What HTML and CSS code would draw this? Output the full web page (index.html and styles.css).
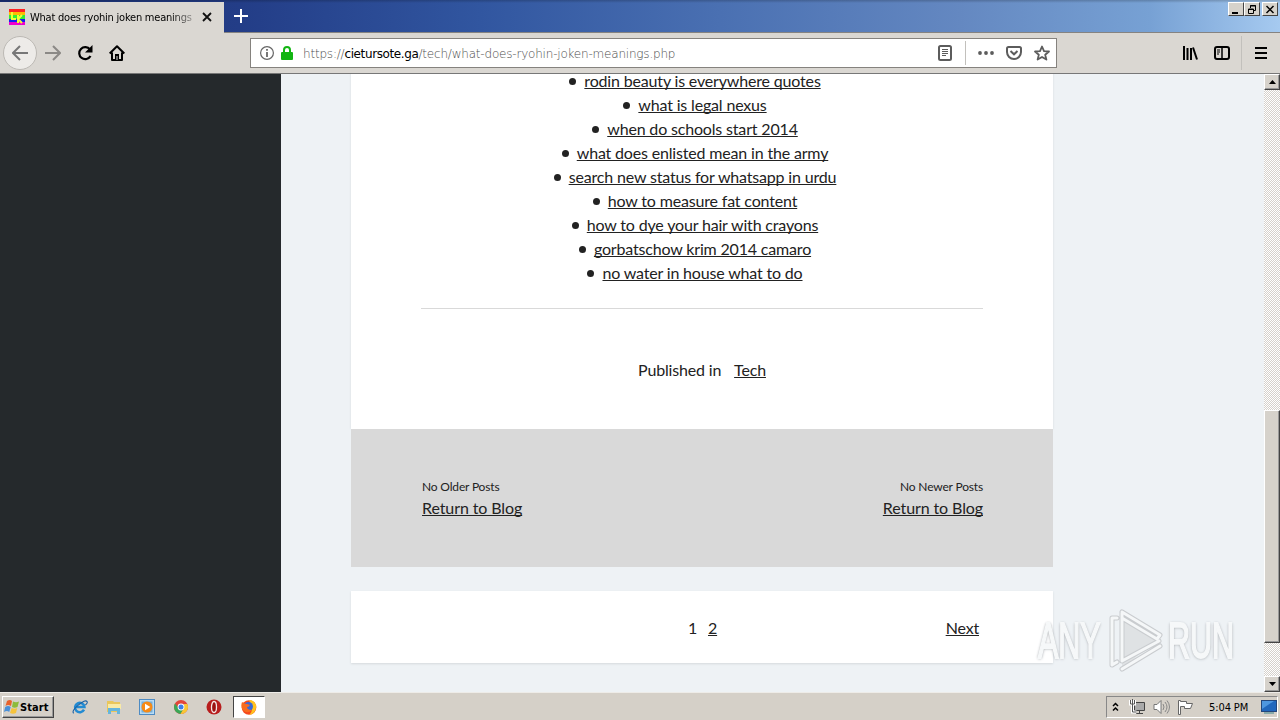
FILE: index.html
```html
<!DOCTYPE html>
<html lang="en">
<head>
    <meta charset="UTF-8">
    <title>What does ryohin joken meanings</title>
    <link rel="stylesheet" href="styles.css">
</head>
<body>
    <!-- Title Bar -->
    <div class="titlebar">
        <div class="tab">
            <svg class="favicon" width="16" height="16" viewBox="0 0 16 16">
                <rect width="16" height="4" fill="#f22"/>
                <rect y="3" width="16" height="4" fill="#fb0"/>
                <rect y="6" width="16" height="4" fill="#3e3"/>
                <rect y="10" width="16" height="3" fill="#12e"/>
                <rect y="13" width="16" height="3" fill="#e0c"/>
                <path d="M3 3v7h4M9 6v8M13 6l-4 4 4 4" fill="none" stroke="#ef3" stroke-width="2"/>
            </svg>
            <span class="tab-title">What does ryohin joken meanings</span>
            <svg class="tab-close" width="10" height="10" viewBox="0 0 10 10"><path d="M1 1l8 8M9 1l-8 8" stroke="#111" stroke-width="1.8"/></svg>
        </div>
        <svg class="new-tab" width="14" height="14" viewBox="0 0 14 14"><path d="M7 0v14M0 7h14" stroke="#fff" stroke-width="2"/></svg>
        <div class="window-buttons">
            <div class="win-btn"><svg width="12" height="11"><path d="M2 9h6" stroke="#000" stroke-width="2"/></svg></div>
            <div class="win-btn"><svg width="12" height="11"><path d="M4.500 4V1.500h5v5H8M4 2h6M2.500 5v4.500h5V5zM2 5.500h6" fill="none" stroke="#000"/></svg></div>
            <div class="win-btn close"><svg width="12" height="11"><path d="M2.500 2l7 7M9.500 2l-7 7" stroke="#000" stroke-width="1.500"/></svg></div>
        </div>
    </div>

    <!-- Navigation Bar -->
    <div class="navbar">
        <div class="back">
            <svg width="16" height="16" viewBox="0 0 16 16"><path d="M16 8H1M8 1L1 8l7 7" fill="none" stroke="#777" stroke-width="2"/></svg>
        </div>
        <svg class="forward" width="16" height="16" viewBox="0 0 16 16"><path d="M0 8h15M8 1l7 7-7 7" fill="none" stroke="#8b8986" stroke-width="2"/></svg>
        <svg class="reload" width="16" height="16" viewBox="0 0 16 16"><path d="M13 4.500A6 6 0 1 0 13.500 11" fill="none" stroke="#000" stroke-width="2.200"/><path d="M15.500 0v7.500H8z"/></svg>
        <svg class="home" width="16" height="16" viewBox="0 0 16 16"><path d="M.7 8.500L8 1.200l7.300 7.300M3 7.500V15h10V7.500" fill="none" stroke="#000" stroke-width="2" stroke-linejoin="round"/><path d="M6 15V9h4v6" /><path d="M8 11v4" stroke="#dad7d2"/></svg>
        <div class="urlbar">
            <svg class="info" width="14" height="14" viewBox="0 0 14 14"><circle cx="7" cy="7" r="6.400" fill="none" stroke="#666" stroke-width="1.200"/><path d="M7 3v1.700M7 6v5" stroke="#555" stroke-width="1.600"/></svg>
            <svg class="lock" width="12" height="14" viewBox="0 0 12 14"><rect y="6" width="12" height="8" rx="1" fill="#12b512"/><path d="M3 7V4a3 3 0 0 1 6 0v3" fill="none" stroke="#12b512" stroke-width="2"/></svg>
            <span class="url">https://<b>cietursote.ga</b>/tech/what-does-ryohin-joken-meanings.php</span>
            <div class="page-actions">
                <svg width="14" height="16" viewBox="0 0 14 16"><rect x="1" y="1" width="12" height="14" rx="1.500" fill="none" stroke="#5c5c5c" stroke-width="2"/><path d="M4 4.500h6M4 6.500h6M4 8.500h6M4 10.500h4" stroke="#5c5c5c"/></svg>
                <span class="divider"></span>
                <svg width="16" height="4" viewBox="0 0 16 4" fill="#5c5c5c"><circle cx="2" cy="2" r="1.900"/><circle cx="8" cy="2" r="1.900"/><circle cx="14" cy="2" r="1.900"/></svg>
                <svg width="16" height="14" viewBox="0 0 16 14" fill="none" stroke="#5c5c5c" stroke-width="2"><path d="M2.500 1h11Q15 1 15 2.500V6a7 7 0 0 1-14 0V2.500Q1 1 2.500 1z"/><path d="M4.500 5L8 8.300 11.500 5"/></svg>
                <svg width="16" height="16" viewBox="0 0 16 16"><path d="M8 1.500l2 4.600 5 .4-3.800 3.300 1.200 4.800L8 12l-4.400 2.600 1.200-4.800L1 6.500l5-.4z" fill="none" stroke="#5c5c5c" stroke-width="1.800" stroke-linejoin="round"/></svg>
            </div>
        </div>
        <div class="toolbar">
            <svg width="16" height="14" viewBox="0 0 16 14"><path d="M2 0v14M5.500 2v12M9 2v12M11 1.500L15 13.500" stroke="#000" stroke-width="2" fill="none"/></svg>
            <svg width="16" height="14" viewBox="0 0 16 14"><rect x="1" y="1" width="14" height="12" rx="2" fill="none" stroke="#000" stroke-width="2"/><path d="M8 1v12" stroke="#000" stroke-width="1.500"/><path d="M3 4h3M3 6h3M3 8h2" stroke="#000"/></svg>
            <span class="divider"></span>
            <svg width="12" height="12" viewBox="0 0 12 12"><path d="M0 1h12M0 6h12M0 11h12" stroke="#000" stroke-width="2"/></svg>
        </div>
    </div>

    <!-- Page -->
    <div class="viewport">
        <div class="sidebar"></div>
        <div class="main">
            <div class="post">
                <ul class="links">
                    <li><a href="#">rodin beauty is everywhere quotes</a></li>
                    <li><a href="#">what is legal nexus</a></li>
                    <li><a href="#">when do schools start 2014</a></li>
                    <li><a href="#">what does enlisted mean in the army</a></li>
                    <li><a href="#">search new status for whatsapp in urdu</a></li>
                    <li><a href="#">how to measure fat content</a></li>
                    <li><a href="#">how to dye your hair with crayons</a></li>
                    <li><a href="#">gorbatschow krim 2014 camaro</a></li>
                    <li><a href="#">no water in house what to do</a></li>
                </ul>
                <div class="published">Published in <a href="#">Tech</a></div>
            </div>
            <div class="post-nav">
                <div class="older">
                    <span>No Older Posts</span>
                    <a href="#">Return to Blog</a>
                </div>
                <div class="newer">
                    <span>No Newer Posts</span>
                    <a href="#">Return to Blog</a>
                </div>
            </div>
            <div class="pagination">
                <span></span>
                <div class="pages"><span>1</span><a href="#">2</a></div>
                <a class="next" href="#">Next</a>
            </div>
        </div>
        <div class="scrollbar">
            <div class="scroll-btn"><svg width="7" height="4"><path d="M0 4L3.500 0 7 4z"/></svg></div>
            <div class="thumb"></div>
            <div class="scroll-btn"><svg width="7" height="4"><path d="M0 0h7L3.500 4z"/></svg></div>
        </div>
        <div class="watermark">
            <span>ANY</span>
            <svg width="56" height="64" viewBox="0 0 56 64" fill="none" stroke-linejoin="round" stroke-linecap="round">
                <path d="M15 4l38 23-38 33z" fill="#dfe2e4"/>
                <path d="M10 9H5v47l5-3M15 3l38 23-3 4-35-21v43l37-20M15 3v49M15 60l38-23" stroke="#c9cccf" stroke-width="5"/>
                <path d="M10 9H5v47l5-3M15 3l38 23-3 4-35-21v43l37-20M15 3v49M15 60l38-23" stroke="#f5f7f8" stroke-width="3"/>
            </svg>
            <span>RUN</span>
        </div>
    </div>

    <!-- Taskbar -->
    <div class="taskbar">
        <div class="start">
            <svg width="16" height="16" viewBox="0 0 16 16"><path d="M3 2q3-2 5 0L7 7Q4 5 1.500 7z" fill="#e8622c"/><path d="M9 2.500q3 1.500 6 0L13.500 8q-3 1.500-5.500 0z" fill="#8dbb3c"/><path d="M1.200 8q3-2 5.500 0l-1.500 5Q3 11 0 13z" fill="#4a90d8"/><path d="M7.700 9q3 1.500 5.500 0L12 14q-3 1.500-6 0z" fill="#f6c33b"/></svg>
            <span>Start</span>
        </div>
        <div class="quick-launch">
            <svg width="16" height="16" viewBox="0 0 18 16"><path d="M13.500 11A5.300 5.300 0 1 1 14 8H5" fill="none" stroke="#238bd2" stroke-width="2.800"/><path d="M2 15Q-1 13 7 6t10-4q1 1-2 4" fill="none" stroke="#1b61a5" stroke-width="1.200"/></svg>
            <svg width="16" height="16" viewBox="0 0 16 16"><path d="M1 2h6l1 1h6v10H1z" fill="#e9c65b"/><path d="M2 5h13v5H2z" fill="#f9eaa5"/><path d="M2 15V9h12v6h-3v-3H5v3z" fill="#66b5dc"/></svg>
            <svg width="16" height="16" viewBox="0 0 16 16"><rect x=".5" y=".5" width="15" height="15" fill="#b8dbf4" stroke="#4e8bc3"/><rect x="2.500" y="2.500" width="11" height="11" fill="#73aeda"/><circle cx="8" cy="8" r="5.500" fill="#f68a16"/><path d="M6 4.700L11.300 8 6 11.300z" fill="#fff"/></svg>
            <svg width="16" height="14" viewBox="-1 0 16 14"><circle cx="7" cy="7" r="7" fill="#e2453a"/><path d="M1 3.500A7 7 0 0 0 6.500 14L10 8.500H5z" fill="#3ba757"/><path d="M13.300 4A7 7 0 0 1 6.500 14L10 8V4z" fill="#f9c735"/><circle cx="7" cy="7" r="3.400" fill="#fff"/><circle cx="7" cy="7" r="2.500" fill="#3e7ee8"/></svg>
            <svg width="16" height="16" viewBox="0 0 16 16"><circle cx="8" cy="8" r="7.500" fill="#b81d1d"/><ellipse cx="8" cy="8" rx="2.500" ry="5.500" fill="#9b1010" stroke="#f3e6e6" stroke-width="1.300"/></svg>
        </div>
        <div class="running">
            <svg width="16" height="16" viewBox="0 0 16 16"><circle cx="8" cy="8.500" r="7.300" fill="#f5491c"/><path d="M8 1q6 0 7.300 6-.5 8-7 9 4-4 2-9z" fill="#ffc21d"/><circle cx="7.500" cy="7.500" r="4.500" fill="#3768d8"/><path d="M1 3q2 2 5 2l3 1q-1 2-3 2 0 3 5 3-4 4-8 1T1 3z" fill="#f76b1e"/></svg>
        </div>
        <div class="tray">
            <svg width="7" height="10" viewBox="0 0 7 10"><path d="M1 4l2.500-2.500L6 4M1 8.500L3.500 6 6 8.500" fill="none" stroke="#000" stroke-width="1.500"/></svg>
            <svg class="net" width="17" height="16" viewBox="0 0 17 16"><path d="M5.500 3.500h10v8h-10zM7 14.500h7M10.500 12v2" fill="#aaa" stroke="#444"/><path d="M1.500 1v4h4V1M3.500 5v8h4" fill="none" stroke="#fff" stroke-width="3"/><path d="M1.500 1v4h4V1M3.500 0v13h4" fill="none" stroke="#555"/></svg>
            <svg class="sound" width="17" height="16" viewBox="0 0 17 16"><path d="M1 5.500h3l4-4v13l-4-4H1z" fill="#fff" stroke="#777"/><path d="M10 5q2 3 0 6M12 3q4 5 0 10M14 1.500q5 6.500 0 13" fill="none" stroke="#888"/></svg>
            <svg class="flag" width="17" height="16" viewBox="0 0 17 16"><path d="M1.500 15.500V1.500h2v1h6v2h6l-2 5h-6v-2h-4v8z" fill="#fff" stroke="#666"/></svg>
            <span class="clock">5:04 PM</span>
            <svg class="desktop" width="16" height="14" viewBox="0 0 16 14"><rect x=".5" y=".5" width="15" height="11" fill="#2167bd" stroke="#24477c"/><path d="M1 1h12L1 9z" fill="#4e97e0"/><path d="M3 13h10" stroke="#8aa" stroke-width="2"/></svg>
        </div>
    </div>
</body>
</html>
```
FILE: styles.css
```css
/* General Styles */
* {
    box-sizing: border-box;
}

body {
    margin: 0;
    width: 1280px;
    height: 720px;
    overflow: hidden;
    display: flex;
    flex-direction: column;
    font-family: "DejaVu Sans Condensed", "DejaVu Sans", sans-serif;
    background-color: #eef2f5;
}

svg {
    display: block;
    flex: none;
}

/* Title Bar */
.titlebar {
    height: 33px;
    flex: none;
    display: flex;
    align-items: flex-start;
    background: linear-gradient(#0003, transparent 3px), linear-gradient(90deg, #1a3177 0, #233d87 240px, #3156a0 480px, #4a70b2 720px, #6488c1 960px, #77a1d4 1150px, #a6caf0 1280px);
    border-bottom: 1px solid #858381;
}

.tab {
    width: 224px;
    height: 32px;
    margin-top: 2px;
    margin-bottom: -1px;
    padding-left: 9px;
    display: flex;
    align-items: center;
    background-color: #dad7d2;
}

.favicon {
    margin-top: -2px;
}

.tab-title {
    width: 164px;
    margin-left: 5px;
    margin-top: -2px;
    font-size: 11px;
    letter-spacing: -0.22px;
    white-space: nowrap;
    overflow: hidden;
    -webkit-mask-image: linear-gradient(90deg, #000 140px, transparent 172px);
    mask-image: linear-gradient(90deg, #000 140px, transparent 172px);
}

.tab-close {
    margin: -2px 0 0 8px;
}

.new-tab {
    margin: 9px 0 0 10px;
}

.window-buttons {
    display: flex;
    margin: 2px 2px 0 auto;
}

.win-btn {
    width: 16px;
    height: 14px;
    padding: 1px;
    background-color: #d6d2cb;
    border: 1px solid;
    border-color: #fff #444 #444 #fff;
}

.win-btn.close {
    margin-left: 2px;
}

/* Navigation Bar */
.navbar {
    height: 41px;
    flex: none;
    display: flex;
    align-items: center;
    padding-left: 3px;
    background-color: #dad7d2;
    border-bottom: 1px solid #777;
}

.back {
    width: 34px;
    height: 34px;
    display: flex;
    align-items: center;
    justify-content: center;
    background-color: #edebe8;
    border: 1px solid #bcb9b4;
    border-radius: 50%;
}

.forward {
    margin-left: 8px;
}

.reload,
.home {
    margin-left: 16px;
}

.urlbar {
    width: 807px;
    height: 30px;
    margin-left: 125px;
    padding: 0 7px 0 9px;
    display: flex;
    align-items: center;
    background-color: #fff;
    border: 1px solid #85827e;
}

.lock {
    margin-left: 7px;
}

.url {
    margin-left: 10px;
    padding-top: 1px;
    font-family: "DejaVu Sans", sans-serif;
    font-size: 12px;
    font-weight: 200;
    letter-spacing: -0.2px;
    color: #4c4c4c;
}

.url b {
    font-weight: 400;
    letter-spacing: -0.38px;
    color: #000;
}

.page-actions {
    margin-left: auto;
    display: flex;
    align-items: center;
    gap: 12px;
}

.page-actions svg:first-child {
    margin-right: 1px;
}

.divider {
    width: 1px;
    height: 24px;
    background-color: #c2c0bc;
}

.page-actions svg:last-child {
    margin-right: -1px;
}

.toolbar {
    margin-left: auto;
    margin-right: 13px;
    display: flex;
    align-items: center;
    gap: 16px;
}

.toolbar .divider {
    height: 34px;
    margin: 0 -3px 0 -5px;
}

/* Page */
.viewport {
    position: relative;
    height: 618px;
    flex: none;
    display: flex;
    overflow: hidden;
    font-family: Lato, sans-serif;
    font-size: 16px;
    line-height: 24px;
    letter-spacing: -0.17px;
    color: #222;
    background-color: #eef2f5;
}

.viewport a {
    color: #222;
    text-decoration: underline;
    text-underline-offset: 1px;
    text-decoration-thickness: 1px;
    text-decoration-skip-ink: none;
}

.sidebar {
    width: 281px;
    background-color: #25292c;
}

.main {
    width: 702px;
    margin-left: 70px;
}

.post {
    height: 360px;
    margin-top: -5px;
    padding: 0 70px;
    background-color: #fff;
    text-align: center;
    box-shadow: 0 0 2px #d5d9dc;
}

.links {
    list-style: none;
    margin: 0;
    padding: 0 0 23px 1px;
    border-bottom: 1px solid #d9d9d9;
}

.links li::before {
    content: "";
    display: inline-block;
    width: 7px;
    height: 7px;
    margin: 0 8px 2px -15px;
    border-radius: 50%;
    background-color: #222;
}

.published {
    margin-top: 49px;
}

.published a {
    margin-left: 9px;
}

.post-nav {
    height: 138px;
    padding: 47px 70px 0;
    display: flex;
    justify-content: space-between;
    background-color: #d9d9d9;
    position: relative;
}

.older,
.newer {
    display: flex;
    flex-direction: column;
}

.newer {
    text-align: right;
}

.older {
    padding-left: 1px;
}

.post-nav span {
    font-size: 12px;
    line-height: 22px;
}

.post-nav a {
    line-height: 20px;
    letter-spacing: -0.1px;
}

.pagination {
    height: 72px;
    margin-top: 24px;
    padding: 2px 74px 0 71px;
    display: grid;
    grid-template-columns: 1fr auto 1fr;
    align-items: center;
    background-color: #fff;
    box-shadow: 0 1px 2px #d5d9dc;
}

.pages {
    display: flex;
    gap: 11px;
    margin-left: 4px;
}

.next {
    justify-self: end;
}

/* Scrollbar */
.scrollbar {
    width: 16px;
    margin-left: auto;
    display: flex;
    flex-direction: column;
    justify-content: space-between;
    background: repeating-conic-gradient(#d5d1cb 0 25%, #fff 0 50%) 0 0 / 2px 2px;
}

.scroll-btn,
.thumb {
    background-color: #d6d2cb;
    border: 1px solid;
    border-color: #fff #444 #444 #fff;
    box-shadow: inset -1px -1px #999;
}

.scroll-btn {
    height: 16px;
    display: flex;
    align-items: center;
    justify-content: center;
}

.thumb {
    height: 233px;
    margin-top: 287px;
}

/* Watermark lies over the page corner */
.watermark {
    position: absolute;
    left: 1038px;
    top: 535px;
    display: flex;
    align-items: center;
    gap: 5px;
}

.watermark span {
    width: 64px;
    font-family: "Liberation Sans", sans-serif;
    font-size: 50px;
    letter-spacing: 0;
    line-height: 64px;
    color: #f6f8f9;
    -webkit-text-stroke: 2px #f6f8f9;
    text-shadow: 0 0 3px #989ca0, 0 1px 4px #b8bcc0;
    transform: scaleX(0.61);
    transform-origin: left;
}

/* Taskbar */
.taskbar {
    height: 28px;
    flex: none;
    display: flex;
    align-items: center;
    padding: 1px 2px 0;
    background-color: #d5d0c8;
    border-top: 1px solid #eeece8;
    font-size: 11px;
}

.start {
    width: 52px;
    height: 22px;
    padding-left: 1px;
    display: flex;
    align-items: center;
    font-weight: bold;
    border: 1px solid;
    border-color: #fff #444 #444 #fff;
    box-shadow: inset -1px -1px #999;
}

.start span {
    letter-spacing: 0.1px;
}

.quick-launch {
    width: 179px;
    padding-left: 18px;
    padding-right: 11px;
    display: flex;
    align-items: center;
    justify-content: space-between;
}

.running {
    width: 32px;
    height: 22px;
    display: flex;
    align-items: center;
    justify-content: center;
    background-color: #fff;
    border: 1px solid;
    border-color: #444 #fff #fff #444;
}

.tray {
    width: 172px;
    height: 22px;
    margin-left: auto;
    padding-left: 5px;
    display: flex;
    align-items: center;
    border: 1px solid;
    border-color: #888 #fff #fff #888;
}

.net {
    margin-left: 10px;
}

.sound,
.flag {
    margin-left: 7px;
}

.clock {
    width: 40px;
    margin-left: 15px;
    white-space: nowrap;
    letter-spacing: -0.1px;
}

.desktop {
    margin-left: auto;
}
```
